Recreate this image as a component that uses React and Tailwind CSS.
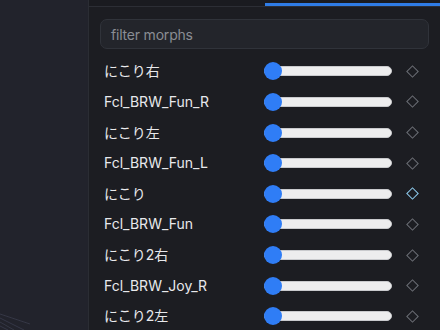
import React from "react";

const rows = [
  { name: "にこり右" },
  { name: "Fcl_BRW_Fun_R" },
  { name: "にこり左" },
  { name: "Fcl_BRW_Fun_L" },
  { name: "にこり", active: true },
  { name: "Fcl_BRW_Fun" },
  { name: "にこり2右" },
  { name: "Fcl_BRW_Joy_R" },
  { name: "にこり2左" },
];

function Row({ name, active }) {
  return (
    <div className="flex items-center h-[30.625px] shrink-0 pl-[4px]">
      <div className="flex-1 text-[14px] text-[#e8e9ec] leading-none whitespace-nowrap">{name}</div>
      <div className="relative w-[128px] h-[18px] flex items-center mr-[13px]">
        <div className="w-full h-[10px] rounded-full bg-[#ededee] border border-[#c9cacd]" />
        <div className="absolute left-0 top-0 w-[18px] h-[18px] rounded-full bg-[#2f7df6]" />
      </div>
      <div className="w-[14px] h-[14px] flex items-center justify-center mr-[10px]">
        <div
          className={
            "w-[9px] h-[9px] rotate-45 border " +
            (active ? "border-[#8fcdf0]" : "border-[#6c6f76]")
          }
        />
      </div>
    </div>
  );
}

export default function App() {
  return (
    <div
      className="w-[440px] h-[330px] flex overflow-hidden bg-[#22232c]"
      style={{ fontFamily: '"Inter", "Noto Sans CJK JP", sans-serif' }}
    >
      <div className="relative w-[88px] shrink-0 bg-[#22232c]">
        <svg className="absolute left-0 bottom-0" width="60" height="30" viewBox="0 0 60 30">
          <g stroke="#3a3d4c" strokeWidth="1" fill="none" opacity="0.8">
            <path d="M0 14 L30 24" />
            <path d="M0 18 L24 30" />
            <path d="M0 22 L14 30" />
            <path d="M0 26 L8 30" />
          </g>
        </svg>
      </div>
      <div className="flex-1 flex flex-col bg-[#1c1d22] border-l border-[#2b2d34]">
        <div className="h-[7px] shrink-0 flex border-b border-[#2c2e35] bg-[#1a1b20]">
          <div className="w-[176px]" />
          <div className="flex-1 flex flex-col">
            <div className="h-[3px]" />
            <div className="h-[3px] bg-[#2f7ce6]" />
          </div>
        </div>
        <div className="flex flex-col px-[11px] pt-[12px]">
          <div className="h-[30px] rounded-[7px] bg-[#23252b] border border-[#30333a] flex items-center px-[10px] text-[14px] tracking-[-0.2px] text-[#8a8d94]">
            filter morphs
          </div>
          <div className="flex flex-col mt-[7px]">
            {rows.map((r, i) => (
              <Row key={i} {...r} />
            ))}
          </div>
        </div>
      </div>
    </div>
  );
}
